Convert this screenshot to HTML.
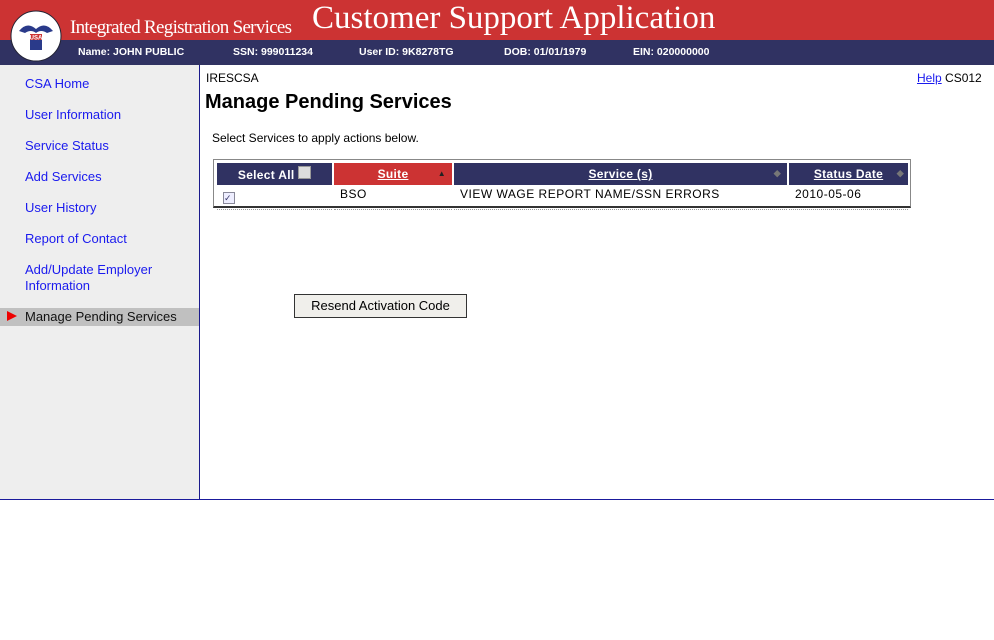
<!DOCTYPE html>
<html><head><style>
body{margin:0;width:994px;height:640px;position:relative;font-family:"Liberation Sans",Arial,sans-serif;background:#fff;overflow:hidden}
.abs{position:absolute}
#top{left:0;top:0;width:994px;height:40px;background:#cc3333}
#bar{left:0;top:40px;width:994px;height:25px;background:#303262;color:#fff;font-size:10.5px;font-weight:bold}
#bar span{position:absolute;top:6px}
#side{left:0;top:65px;width:199px;height:435px;background:#eeeeee;border-right:1px solid #1a1a8c}
#side a{position:absolute;left:25px;color:#1a1aee;font-size:13px;text-decoration:none;line-height:16px}
#line{left:0;top:499px;width:994px;height:1px;background:#1a1a9c}
th{color:#fff;font-size:12px;height:22px;padding:0;letter-spacing:0.3px}
td{font-size:12px;letter-spacing:0.5px;height:17px;padding:0 0 2px 6px;border-bottom:1px dotted #999;vertical-align:top}
</style></head><body>
<div id="top" class="abs">
 <div class="abs" style="left:70px;top:17px;color:#fff;font-family:'Liberation Serif',serif;font-size:19px;letter-spacing:-0.7px">Integrated Registration Services</div>
 <div class="abs" style="left:312px;top:0px;color:#fff;font-family:'Liberation Serif',serif;font-size:33px">Customer Support Application</div>
</div>
<div id="bar" class="abs"><span style="left:78px">Name: JOHN PUBLIC</span><span style="left:233px">SSN: 999011234</span><span style="left:359px">User ID: 9K8278TG</span><span style="left:504px">DOB: 01/01/1979</span><span style="left:633px">EIN: 020000000</span></div>
<svg class="abs" style="left:9px;top:9px" width="54" height="54" viewBox="0 0 54 54"><circle cx="27" cy="27" r="25" fill="#fff" stroke="#223"/><path d="M10 22 Q18 12 27 20 Q36 12 44 22 L38 24 Q32 20 27 24 Q22 20 16 24Z" fill="#2a3a8a"/><rect x="21" y="25" width="12" height="6" fill="#c33"/><text x="27" y="30.5" font-size="6" font-weight="bold" fill="#fff" text-anchor="middle" font-family="Liberation Sans">USA</text><rect x="21" y="31" width="12" height="10" fill="#2a3a8a"/></svg>
<div id="side" class="abs">
 <a style="top:11px">CSA Home</a><a style="top:42px">User Information</a><a style="top:73px">Service Status</a><a style="top:104px">Add Services</a><a style="top:135px">User History</a><a style="top:166px">Report of Contact</a><a style="top:197px">Add/Update Employer<br>Information</a>
 <div class="abs" style="left:0;top:243px;width:199px;height:18px;background:#c0c0c0"></div>
 <svg class="abs" style="left:7px;top:246px" width="11" height="10"><path d="M0 0 L10 5 L0 10Z" fill="#e00"/></svg>
 <a style="top:244px;color:#111">Manage Pending Services</a>
</div>
<div id="line" class="abs"></div>
<div class="abs" style="left:206px;top:71px;font-size:12px">IRESCSA</div>
<div class="abs" style="left:917px;top:71px;font-size:12px"><u style="color:#1a1aee">Help</u> CS012</div>
<div class="abs" style="left:205px;top:91px;font-size:20px;font-weight:bold">Manage Pending Services</div>
<div class="abs" style="left:212px;top:131px;font-size:12px">Select Services to apply actions below.</div>
<div class="abs" style="left:213px;top:159px;width:696px;height:46px;border:1px solid #888;border-bottom:2px solid #333">
<table style="border-collapse:separate;border-spacing:2px;margin:1px 0 0 1px;width:695px">
<tr><th style="background:#303262;width:115px">Select All <span style="display:inline-block;width:11px;height:11px;background:#ddd;border:1px solid #999;vertical-align:0px"></span></th>
<th style="background:#cc3333;width:118px;position:relative"><u>Suite</u><span style="position:absolute;right:6px;top:6px;font-size:8px;color:#222">▲</span></th>
<th style="background:#303262;width:333px;position:relative"><u>Service (s)</u><span style="position:absolute;right:6px;top:5px;font-size:9px;color:#777">◆</span></th>
<th style="background:#303262;position:relative"><u>Status Date</u><span style="position:absolute;right:4px;top:5px;font-size:9px;color:#777">◆</span></th></tr>
<tr><td style="padding-top:3px"><span style="display:inline-block;width:10px;height:10px;border:1px solid #889;background:#eef;font-size:9px;line-height:10px;color:#336">✓</span></td><td>BSO</td><td>VIEW WAGE REPORT NAME/SSN ERRORS</td><td>2010-05-06</td></tr>
</table></div>
<div class="abs" style="left:294px;top:294px;width:171px;height:22px;border:1px solid #333;background:#f0efeb;font-size:13px;text-align:center;line-height:22px">Resend Activation Code</div>
</body></html>
